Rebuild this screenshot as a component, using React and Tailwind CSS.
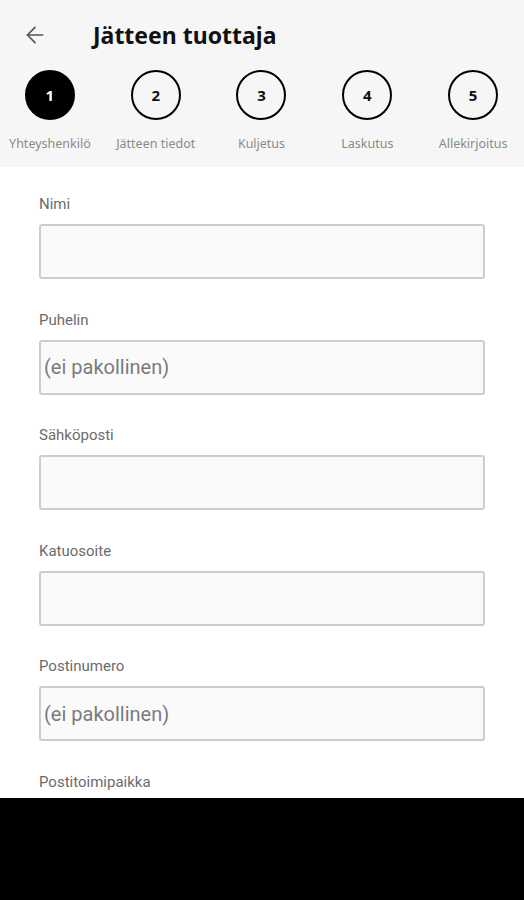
import { ArrowLeft } from 'lucide-react';

const steps = [
  'Yhteyshenkilö',
  'Jätteen tiedot',
  'Kuljetus',
  'Laskutus',
  'Allekirjoitus',
];

const fields = [
  { label: 'Nimi', placeholder: '' },
  { label: 'Puhelin', placeholder: '(ei pakollinen)' },
  { label: 'Sähköposti', placeholder: '' },
  { label: 'Katuosoite', placeholder: '' },
  { label: 'Postinumero', placeholder: '(ei pakollinen)' },
  { label: 'Postitoimipaikka', placeholder: '' },
];

const App = () => {
  return (
    <div className="w-[524px] h-[900px] flex flex-col overflow-hidden bg-white font-['Noto_Sans',sans-serif]">
      <header className="h-[167px] shrink-0 bg-[#f6f6f6]">
        <div className="h-[70px] flex items-center pl-[22px]">
          <ArrowLeft className="w-[26px] h-[26px] text-[#555]" strokeWidth={1.6} />
          <h1 className="ml-[45px] text-[23px] font-bold text-[#111]">
            Jätteen tuottaja
          </h1>
        </div>
        <div className="grid grid-cols-5 -ml-[3px] mr-[-2px]">
          {steps.map((step, i) => (
            <div key={step} className="flex flex-col items-center">
              <div
                className={`w-[50px] h-[50px] rounded-full border-2 border-black flex items-center justify-center text-[15px] font-bold ${
                  i === 0 ? 'bg-black text-white' : 'bg-transparent text-[#111]'
                }`}
              >
                {i + 1}
              </div>
              <span className="mt-[15px] text-[12.5px] text-[#8a8a8a] whitespace-nowrap">
                {step}
              </span>
            </div>
          ))}
        </div>
      </header>

      <main className="flex-1 overflow-hidden px-[39px] pt-[27px] font-['Roboto',sans-serif]">
        {fields.map((field) => (
          <div key={field.label} className="mb-[30.5px]">
            <label className="block h-[20px] leading-[20px] text-[15px] text-[#6b6b6b]">
              {field.label}
            </label>
            <input
              type="text"
              placeholder={field.placeholder}
              className="mt-[10px] w-[446px] h-[55px] border-2 border-[#cdcdcd] rounded-[3px] bg-[#fafafa] px-[3px] text-[20px] text-[#333] placeholder:text-[#7a7a7a] outline-none"
            />
          </div>
        ))}
      </main>

      <div className="h-[102px] shrink-0 bg-black" />
    </div>
  );
};

export default App;
